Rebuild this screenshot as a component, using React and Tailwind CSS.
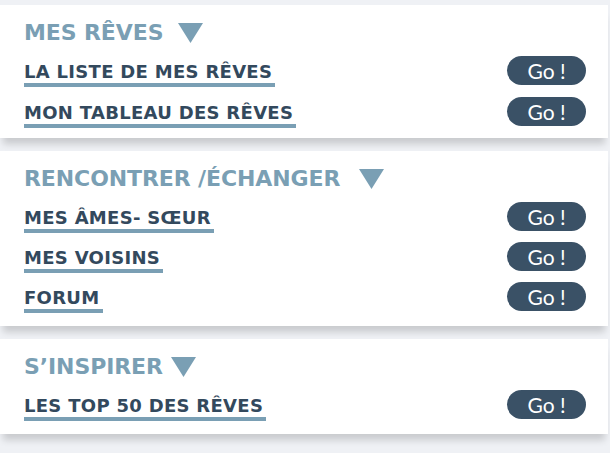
import React from 'react'

const sections = [
  { title: 'MES RÊVES', gap: 'ml-[15px]', items: ['LA LISTE DE MES RÊVES', 'MON TABLEAU DES RÊVES'], list: 'gap-[12px]', pb: 'pb-[12px]' },
  { title: 'RENCONTRER /ÉCHANGER', gap: 'ml-[19px]', items: ['MES ÂMES- SŒUR', 'MES VOISINS', 'FORUM'], list: 'gap-[11px]', pb: 'pb-[15px]' },
  { title: 'S’INSPIRER', gap: 'ml-[8px]', items: ['LES TOP 50 DES RÊVES'], list: 'gap-[11px]', pb: 'pb-[15px]' },
]

const Triangle = () => (
  <svg width="25" height="20" viewBox="0 0 25 20" className="shrink-0">
    <polygon points="0,0 25,0 12.5,20" fill="#7a9fb4" />
  </svg>
)

const Card = ({ title, gap, items, list, pb }) => (
  <div className={`w-[608px] bg-white shadow-[0_9px_7px_-3px_rgba(0,0,0,0.16)] pl-6 pr-6 pt-[18px] ${pb}`}>
    <div className="flex items-center h-[20px]">
      <span className="font-['DejaVu_Sans',sans-serif] text-[22px] font-bold leading-none text-[#7a9fb4] tracking-[-0.1px]">{title}</span>
      <span className={gap}><Triangle /></span>
    </div>
    <div className={`mt-[13px] flex flex-col ${list}`}>
      {items.map((item) => (
        <div key={item} className="flex items-center justify-between h-[29px]">
          <span className="font-['DejaVu_Sans',sans-serif] text-[18px] font-bold leading-none text-[#33495d] border-b-4 border-[#7a9fb4] pb-[2px] pr-[3px] mt-[8px] tracking-[0.3px]">
            {item}
          </span>
          <button className="font-['Lato',sans-serif] w-[79px] h-[29px] rounded-full bg-[#3a5166] text-white text-[21px] leading-none flex items-center justify-center mr-[-2px]">
            Go !
          </button>
        </div>
      ))}
    </div>
  </div>
)

export default function App() {
  return (
    <div className="w-[610px] h-[453px] bg-[#eff1f5] pt-[5px] flex flex-col gap-[13px] overflow-hidden">
      {sections.map((s) => (
        <Card key={s.title} {...s} />
      ))}
    </div>
  )
}
